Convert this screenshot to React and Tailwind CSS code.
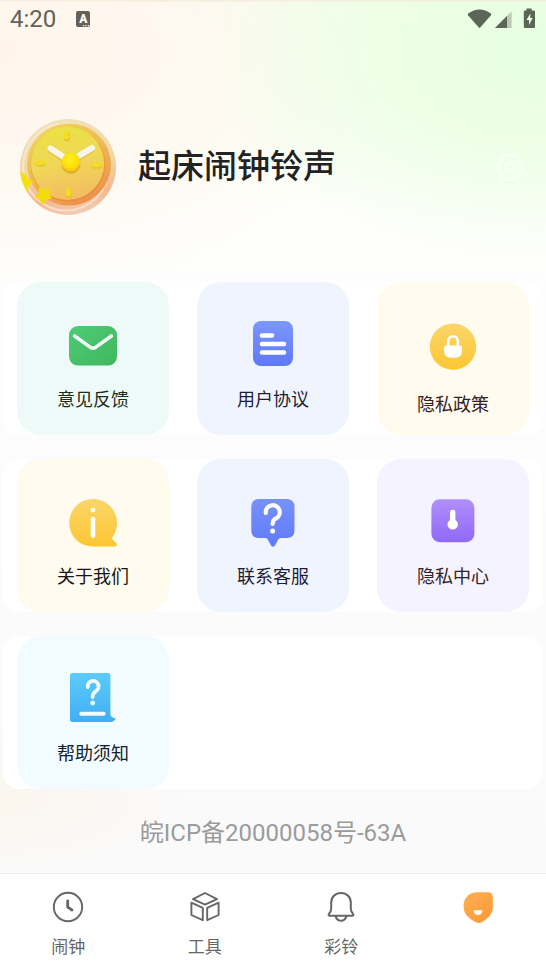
import { useState } from 'react';

const MailIcon = () => (
    <svg width="60" height="60" viewBox="0 0 60 60" aria-hidden="true">
        <defs>
            <linearGradient id="mail" x1="0" y1="0" x2="1" y2="1">
                <stop offset="0" stopColor="#4fcb77" />
                <stop offset="1" stopColor="#3fb75c" />
            </linearGradient>
        </defs>
        <rect x="6" y="12" width="48" height="39.6" rx="9" fill="url(#mail)" />
        <path d="M11.6 22 L27.5 33.4 Q30 35 32.5 33.4 L48.4 22" fill="none" stroke="#effaf6" strokeWidth="3.6" strokeLinecap="round" strokeLinejoin="round" />
    </svg>
);

const AgreementIcon = () => (
    <svg width="60" height="60" viewBox="0 0 60 60" aria-hidden="true">
        <defs>
            <linearGradient id="agreement" x1="0" y1="0" x2="0" y2="1">
                <stop offset="0" stopColor="#7c97fb" />
                <stop offset="1" stopColor="#5f78f6" />
            </linearGradient>
        </defs>
        <rect x="10" y="7" width="40" height="45" rx="8" fill="url(#agreement)" />
        <path d="M19 21.5 H29 M19 30 H41 M19 38.5 H41" stroke="#fff" strokeWidth="4.6" strokeLinecap="round" />
    </svg>
);

const LockIcon = () => (
    <svg width="60" height="65" viewBox="0 0 60 65" aria-hidden="true">
        <defs>
            <linearGradient id="lock" x1="0" y1="0" x2="0" y2="1">
                <stop offset="0" stopColor="#fbd56a" />
                <stop offset="1" stopColor="#fbc732" />
            </linearGradient>
        </defs>
        <circle cx="30" cy="32.6" r="23.2" fill="url(#lock)" />
        <path d="M25.2 33 V27 a4.8 4.8 0 0 1 9.6 0 V33" fill="none" stroke="#fff" strokeWidth="2.6" />
        <path d="M23 31.4 H37 Q39 31.4 39 33.4 V36.5 Q39 43.8 32 43.8 H28 Q21 43.8 21 36.5 V33.4 Q21 31.4 23 31.4 Z" fill="#fff" />
    </svg>
);

const AboutIcon = () => (
    <svg width="60" height="60" viewBox="0 0 60 60" aria-hidden="true">
        <defs>
            <linearGradient id="about" x1="0" y1="0" x2="0" y2="1">
                <stop offset="0" stopColor="#fbd56a" />
                <stop offset="1" stopColor="#fbc732" />
            </linearGradient>
        </defs>
        <path d="M30 8 A24 24 0 0 1 48.6 47.2 L53.3 52.2 Q55.2 55.6 51.5 55.6 H30 A23.8 23.8 0 0 1 30 8 Z" fill="url(#about)" />
        <circle cx="30" cy="19" r="2.3" fill="#fff" />
        <path d="M30 28 V44.6" stroke="#fff" strokeWidth="4.6" strokeLinecap="round" />
    </svg>
);

const ServiceIcon = () => (
    <svg width="60" height="60" viewBox="0 0 60 60" aria-hidden="true">
        <defs>
            <linearGradient id="service" x1="0" y1="0" x2="0" y2="1">
                <stop offset="0" stopColor="#7791fb" />
                <stop offset="1" stopColor="#5f7af7" />
            </linearGradient>
        </defs>
        <path d="M16 8 H43.5 Q51.5 8 51.5 16 V39 Q51.5 47 43.5 47 H37.5 Q36 47 35 49 L32 54.5 Q30 57 28 54.5 L25 49 Q24 47 22.5 47 H16 Q8.3 47 8.3 39 V16 Q8.3 8 16 8 Z" fill="url(#service)" />
        <path d="M22.8 22 A7 7 0 1 1 33.4 27.2 Q29.6 29 29.6 33" fill="none" stroke="#fff" strokeWidth="4.2" strokeLinecap="round" />
        <circle cx="29.6" cy="40" r="2.5" fill="#fff" />
    </svg>
);

const PrivacyIcon = () => (
    <svg width="60" height="60" viewBox="0 0 60 60" aria-hidden="true">
        <defs>
            <linearGradient id="privacy" x1="0" y1="0" x2="0" y2="1">
                <stop offset="0" stopColor="#b08ffa" />
                <stop offset="1" stopColor="#9069f8" />
            </linearGradient>
        </defs>
        <rect x="8.4" y="8.3" width="43" height="43" rx="8.5" fill="url(#privacy)" />
        <path d="M29.7 21.5 V34" stroke="#fff" strokeWidth="5.4" strokeLinecap="round" />
        <circle cx="29.7" cy="33.4" r="5.2" fill="#fff" />
    </svg>
);

const HelpIcon = () => (
    <svg width="60" height="60" viewBox="0 0 60 60" aria-hidden="true">
        <defs>
            <linearGradient id="help" x1="0" y1="0" x2="0" y2="1">
                <stop offset="0" stopColor="#5ccbfb" />
                <stop offset="1" stopColor="#41aef2" />
            </linearGradient>
        </defs>
        <path d="M9.5 5 H45 Q47.4 5 47.4 7.4 V46 Q47.8 50 52.8 50.4 Q51 54 46.5 54 H9.5 Q7 54 7 51.5 V7.4 Q7 5 9.5 5 Z" fill="url(#help)" />
        <path d="M24.8 19 A5.4 5.4 0 1 1 33 23 Q29.6 25.4 29.6 29" fill="none" stroke="#f2fbff" strokeWidth="3.8" strokeLinecap="round" />
        <circle cx="29.6" cy="35" r="2.4" fill="#f2fbff" />
        <path d="M18.2 45.8 H40.6" stroke="#f2fbff" strokeWidth="4" strokeLinecap="round" />
    </svg>
);

const AlarmTabIcon = () => (
    <svg width="32" height="32" viewBox="0 0 32 32" fill="none" stroke="#666" aria-hidden="true">
        <circle cx="16" cy="16" r="14.2" strokeWidth="1.9" />
        <path d="M15.7 10 V16.2 L20 19" strokeWidth="2.8" strokeLinecap="round" strokeLinejoin="round" />
    </svg>
);

const ToolsTabIcon = () => (
    <svg width="32" height="32" viewBox="0 0 32 32" fill="none" stroke="#666" strokeWidth="1.9" strokeLinejoin="round" aria-hidden="true">
        <path d="M16 2 L28 8.1 L16 13.6 L4 8.1 Z" />
        <path d="M2.4 11.6 L13.8 16.8 V29.2 L2.4 24 Z" />
        <path d="M29.6 11.6 L18.2 16.8 V29.2 L29.6 24 Z" />
    </svg>
);

const RingTabIcon = () => (
    <svg width="32" height="32" viewBox="0 0 32 32" fill="none" stroke="#666" strokeWidth="2" strokeLinecap="round" strokeLinejoin="round" aria-hidden="true">
        <path d="M16 2 C21.8 2 25.8 6.2 25.8 11.6 V17.6 C25.8 20.4 26.8 21.6 28 22.8 C28.9 23.8 28.3 24.8 27.2 24.8 H4.8 C3.7 24.8 3.1 23.8 4 22.8 C5.2 21.6 6.2 20.4 6.2 17.6 V11.6 C6.2 6.2 10.2 2 16 2 Z" />
        <path d="M10.6 25.4 Q12 29.8 16 29.8 Q20 29.8 21.4 25.4" />
    </svg>
);

const MineTabIcon = () => (
    <svg width="32" height="32" viewBox="0 0 32 32" aria-hidden="true">
        <defs>
            <linearGradient id="mine" x1="0" y1="0" x2="1" y2="1">
                <stop offset="0" stopColor="#ffb054" />
                <stop offset="1" stopColor="#fb9836" />
            </linearGradient>
        </defs>
        <path d="M15 1.3 H26 Q30.8 1.3 30.8 6.2 V16 C30.8 22.5 27.4 26.3 20.2 31 Q16.4 33 12.4 30.6 C5.4 26.6 1.6 22.4 1.6 15 C1.6 6.6 7.4 1.3 15 1.3 Z" fill="url(#mine)" />
        <path d="M11.6 19.2 H20.4 Q20.2 24 16 24 Q11.8 24 11.6 19.2 Z" fill="#fff" />
    </svg>
);

const ClockAvatar = () => (
    <svg className="size-24 shrink-0" viewBox="0 0 96 96" aria-hidden="true">
        <defs>
            <linearGradient id="rim" x1="0.4" y1="0" x2="0.6" y2="1">
                <stop offset="0" stopColor="#efe0bd" />
                <stop offset="0.45" stopColor="#f3d9a8" />
                <stop offset="0.8" stopColor="#f2b98e" />
                <stop offset="1" stopColor="#f3cdb8" />
            </linearGradient>
            <linearGradient id="body" x1="0.2" y1="0" x2="0.75" y2="1">
                <stop offset="0" stopColor="#f0d65c" />
                <stop offset="0.55" stopColor="#efb452" />
                <stop offset="1" stopColor="#ee8d4c" />
            </linearGradient>
            <linearGradient id="face" x1="0.4" y1="0" x2="0.6" y2="1">
                <stop offset="0" stopColor="#ece244" />
                <stop offset="0.5" stopColor="#f0d659" />
                <stop offset="1" stopColor="#f3bb62" />
            </linearGradient>
            <linearGradient id="edge" x1="0.2" y1="0" x2="0.7" y2="1">
                <stop offset="0" stopColor="#e5b82c" />
                <stop offset="1" stopColor="#e98a3a" />
            </linearGradient>
            <radialGradient id="knob" cx="0.45" cy="0.35" r="0.7">
                <stop offset="0" stopColor="#fff01c" />
                <stop offset="0.65" stopColor="#fbdf0c" />
                <stop offset="1" stopColor="#f0bc14" />
            </radialGradient>
            <clipPath id="round">
                <circle cx="48" cy="48" r="48" />
            </clipPath>
        </defs>
        <g clipPath="url(#round)">
            <rect width="96" height="96" fill="url(#rim)" />
            <ellipse cx="46" cy="48" rx="43" ry="43.5" fill="none" stroke="#fae9da" strokeWidth="2" opacity="0.7" />
            <ellipse cx="49" cy="45.5" rx="42" ry="41" fill="url(#body)" />
            <circle cx="48" cy="45.4" r="37.4" fill="url(#edge)" />
            <circle cx="47.6" cy="44.4" r="36.6" fill="url(#face)" />
            <g fill="#e3b92c">
                <rect x="44" y="12.8" width="6" height="9.4" rx="3" />
                <rect x="16" y="41.8" width="9.6" height="5.6" rx="2.8" />
                <rect x="72" y="44" width="9.6" height="5.6" rx="2.8" />
                <rect x="46" y="69.4" width="6" height="9.4" rx="3" />
            </g>
            <g fill="#f2df24">
                <rect x="44" y="12.4" width="5.4" height="8.4" rx="2.7" />
                <rect x="16" y="41.4" width="9.4" height="4.8" rx="2.4" />
                <rect x="72" y="43.6" width="9.4" height="4.8" rx="2.4" />
                <rect x="46" y="69" width="5.4" height="8.4" rx="2.7" />
            </g>
            <path d="M31 32 L43.5 40 M58 39.2 L71.5 31" stroke="#d8ac3c" strokeWidth="6" strokeLinecap="round" opacity="0.4" />
            <path d="M30.6 29.4 L44 38.2 M57.6 37.6 L72 29" stroke="#f8f5ef" strokeWidth="6" strokeLinecap="round" />
            <circle cx="51" cy="45.4" r="9.4" fill="#e0ac30" />
            <circle cx="51" cy="43" r="9.4" fill="url(#knob)" />
            <path d="M-1 52 L6 56 L8 60 L14 62.4 L9 66 L8 73 L2 75 Z" fill="#f2e20a" />
            <path d="M20 69 L24.4 72 L29 70.4 L28.2 75 L30.4 79 L26 79.8 L22.6 84.6 L20.6 80.2 L16.4 78 L19.6 74.4 Z" fill="#f2dc0c" stroke="#f2dc0c" strokeWidth="2" strokeLinejoin="round" />
        </g>
    </svg>
);

const StatusBar = () => (
    <div className="flex h-9 items-center justify-between border-t-2 border-[#f3ead9]/60 pl-[10px] pr-[9px] text-[#62625a]">
        <div className="flex items-center gap-5">
            <span className="text-2xl leading-8">4:20</span>
            <span className="relative flex h-4 w-[14px] items-center justify-center rounded-xs bg-[#62625a] text-xs font-black leading-4 text-[#fff6ea]">
                A
                <svg className="absolute bottom-0 right-0" width="8" height="3" viewBox="0 0 8 3" fill="#fff6ea" aria-hidden="true">
                    <rect x="1" y="1" width="1.3" height="1.3" />
                    <rect x="3.4" y="1" width="1.3" height="1.3" />
                    <rect x="5.8" y="1" width="1.3" height="1.3" />
                </svg>
            </span>
        </div>
        <svg width="70" height="22" viewBox="0 0 70 22" fill="#5c6657" aria-hidden="true">
            <path d="M1.2 5.6 Q12.5 -2.4 23.8 5.6 Q24.6 6.4 24 7.2 L13.2 19.6 Q12.5 20.2 11.8 19.6 L1 7.2 Q0.4 6.4 1.2 5.6 Z" />
            <path d="M28 20 L44.6 3.5 V20 Z" fill="#bccab4" />
            <path d="M28 20 L40 8 V20 Z" />
            <path d="M59.4 0.6 H64.6 V2.6 H66.8 Q68 2.6 68 3.8 V18.8 Q68 20 66.8 20 H58 Q56.8 20 56.8 18.8 V3.8 Q56.8 2.6 58 2.6 H59.4 Z" />
            <path d="M63.4 5.4 L59.4 12 H62 V17 L65.6 10 H63.2 Z" fill="#ecffe6" />
        </svg>
    </div>
);

const menuRows = [
    [
        { label: '意见反馈', icon: MailIcon, tile: 'bg-[#eefaf7]', text: 'text-[#1b2e22]' },
        { label: '用户协议', icon: AgreementIcon, tile: 'bg-[#f0f4ff]', text: 'text-[#1d1d35]' },
        { label: '隐私政策', icon: LockIcon, tile: 'bg-[#fffbef]', text: 'text-[#33221f]' },
    ],
    [
        { label: '关于我们', icon: AboutIcon, tile: 'bg-[#fffbef]', text: 'text-[#161616]' },
        { label: '联系客服', icon: ServiceIcon, tile: 'bg-[#f0f4ff]', text: 'text-[#1d1d35]' },
        { label: '隐私中心', icon: PrivacyIcon, tile: 'bg-[#f5f3ff]', text: 'text-[#33221f]' },
    ],
    [
        { label: '帮助须知', icon: HelpIcon, tile: 'bg-[#f2fbff]', text: 'text-[#14222b]' },
    ],
];

const tabs = [
    { key: 'alarm', label: '闹钟', icon: AlarmTabIcon },
    { key: 'tools', label: '工具', icon: ToolsTabIcon },
    { key: 'ring', label: '彩铃', icon: RingTabIcon },
    { key: 'mine', label: '我的', icon: MineTabIcon },
];

export default function App() {
    const [activeTab, setActiveTab] = useState('mine');

    return (
        <div className="flex min-h-screen flex-col bg-[#fcfcfc] font-[Roboto,'Noto_Sans_CJK_SC',sans-serif]">
            <div className="flex grow flex-col bg-[radial-gradient(ellipse_340px_210px_at_100%_50px,#e8ffe1_0%,#ebffe5_40%,transparent_100%),radial-gradient(ellipse_420px_240px_at_0%_50px,#fff5eb_0%,#fff8f0_40%,transparent_100%),radial-gradient(ellipse_180px_70px_at_0%_800px,#fbf5ed_0%,transparent_100%),linear-gradient(to_bottom,#f7fdec_0px,#fafef3_100px,#fefefc_220px,#fdfdfd_300px,#fcfcfc_450px,#fafafa_100%)]">
                <StatusBar />

                <header className="flex items-center gap-[22px] px-5 pb-[67px] pt-[83px]">
                    <ClockAvatar />
                    <h1 className="grow text-[33px] font-medium leading-10 text-[#222]">起床闹钟铃声</h1>
                    <button type="button" aria-label="设置">
                        <svg width="32" height="32" viewBox="0 0 32 32" fill="none" stroke="#fff" strokeOpacity="0.6" strokeWidth="2.4" strokeLinejoin="round" aria-hidden="true">
                            <path d="M10 4 H22 L28.5 16 L22 28 H10 L3.5 16 Z" />
                            <circle cx="16" cy="16" r="4" />
                        </svg>
                    </button>
                </header>

                {/* Menu */}
                <main className="flex flex-col gap-6 px-[3px]">
                    {menuRows.map((row, i) => (
                        <div key={i} className="grid grid-cols-3 gap-7 rounded-2xl bg-white px-[14px]">
                            {row.map(({ label, icon: Icon, tile, text }) => (
                                <button
                                    key={label}
                                    type="button"
                                    className={`flex h-[153px] flex-col items-center gap-3 rounded-3xl pt-8 ${tile}`}
                                >
                                    <Icon />
                                    <span className={`text-lg leading-7 ${text}`}>{label}</span>
                                </button>
                            ))}
                        </div>
                    ))}
                </main>

                <p className="mb-6 mt-7 text-center text-2xl leading-8 text-[#9b9b9b]">皖ICP备20000058号-63A</p>
            </div>

            {/* Bottom tabs */}
            <nav className="grid grid-cols-4 border-t border-[#eee] bg-white pb-[13px] pt-[17px]">
                {tabs.map(({ key, label, icon: Icon }) => (
                    <button
                        key={key}
                        type="button"
                        aria-label={label}
                        aria-current={activeTab === key ? 'page' : undefined}
                        onClick={() => setActiveTab(key)}
                        className="flex flex-col items-center gap-3"
                    >
                        <Icon />
                        {key !== 'mine' && <span className="text-[17px] leading-6 text-[#666]">{label}</span>}
                    </button>
                ))}
            </nav>
        </div>
    );
}
